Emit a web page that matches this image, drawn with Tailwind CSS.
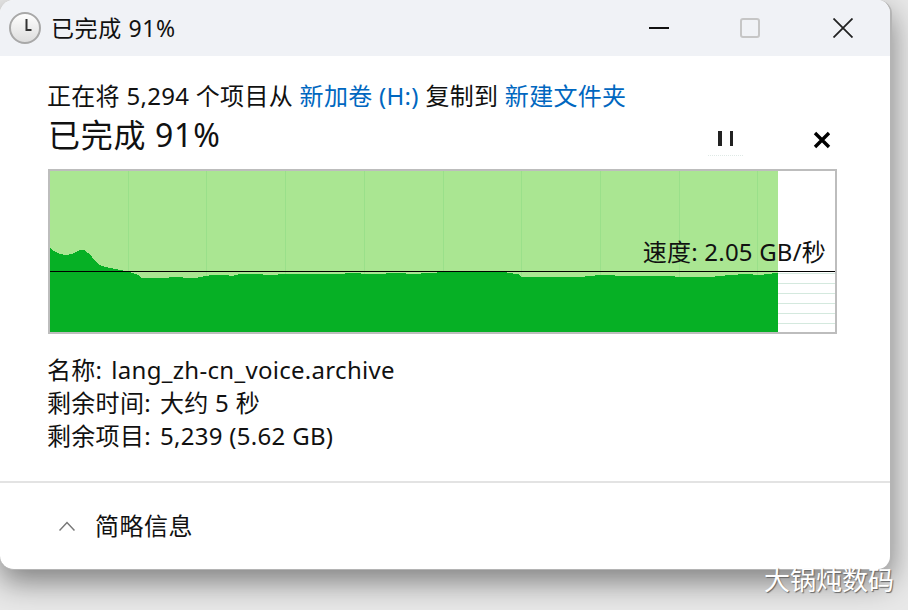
<!DOCTYPE html>
<html lang="zh-CN">
<head>
  <meta charset="UTF-8">
  <title>已完成 91%</title>
  <script src="https://cdn.jsdelivr.net/npm/@tailwindcss/browser@4"></script>
</head>
<body class="relative w-[908px] h-[610px] overflow-hidden bg-[#e8e8e8] font-['Noto_Sans','Noto_Sans_CJK_SC',sans-serif] text-[#111]">
  <!-- window -->
  <div class="flex flex-col w-[892px] h-[570px] bg-white rounded-[14px] border-r-2 border-b border-[#b4b4b4] overflow-hidden shadow-[0_12px_30px_rgba(0,0,0,0.45)]">
    <!-- title bar -->
    <div class="flex items-center h-14 shrink-0 bg-[#f0f2f6] pl-[9px]">
      <svg class="w-[32px] h-[32px]" viewBox="0 0 32 32">
        <defs>
          <linearGradient id="face" x1="0" y1="0" x2="0" y2="1">
            <stop offset="0" stop-color="#ffffff"/>
            <stop offset="1" stop-color="#dcdcdc"/>
          </linearGradient>
        </defs>
        <circle cx="16" cy="16" r="15" fill="url(#face)" stroke="#a8a8a8" stroke-width="2"/>
        <path d="M17.5 7v11h5" fill="none" stroke="#333" stroke-width="2"/>
      </svg>
      <span class="ml-[10px] text-[23px] leading-none tracking-[0.6px]">已完成 91%</span>
      <div class="flex items-center ml-auto">
        <svg class="w-5 h-5 mr-[71px]" viewBox="0 0 20 20"><path d="M0 10h20" stroke="#111" stroke-width="2"/></svg>
        <svg class="w-5 h-5 mr-[73px]" viewBox="0 0 20 20"><rect x="1" y="1" width="18" height="18" rx="2" fill="none" stroke="#c6c6c6" stroke-width="2"/></svg>
        <svg class="w-5 h-5 mr-[37px]" viewBox="0 0 20 20"><path d="M0.5 0.5l19 19M19.5 0.5l-19 19" stroke="#222" stroke-width="1.8"/></svg>
      </div>
    </div>
    <!-- progress -->
    <div class="flex flex-col flex-1 pl-12 pr-[53px]">
      <p class="-ml-px mt-[22px] text-[24px] leading-[36px] whitespace-nowrap tracking-[0.3px]">正在将 5,294 个项目从 <span class="text-[#0067c0]">新加卷 (H:)</span> 复制到 <span class="text-[#0067c0]">新建文件夹</span></p>
      <div class="flex items-center h-[42px]">
        <span class="text-[32px] leading-none tracking-[0.7px]">已完成 91%</span>
        <div class="ml-auto mr-[70px] flex gap-2 mt-[8px] border-b border-dotted border-[#dfe9e6] h-[34px] w-[35px] justify-center pt-[9px]">
          <span class="w-[3.5px] h-[15px] bg-[#222]"></span>
          <span class="w-[3.5px] h-[15px] bg-[#222]"></span>
        </div>
        <svg class="w-[18px] h-[18px] mr-[6px] mt-[10px]" viewBox="0 0 18 18"><path d="M2 2l14 14M16 2L2 16" stroke="#000" stroke-width="3.4"/></svg>
      </div>
      <!-- chart -->
      <div class="relative w-[789px] h-[165px] mt-[13px] border-2 border-[#bdbdbd] bg-white">
        <svg class="block" width="785" height="161" viewBox="50 171 785 161" shape-rendering="crispEdges">
          <rect x="50" y="171" width="728" height="161" fill="#aae692"/>
          <g stroke="#9ae08a" stroke-width="1">
            <path d="M128.5 171v161M206.5 171v161M285.5 171v161M364.5 171v161M443.5 171v161M521.5 171v161M600.5 171v161M679.5 171v161M757.5 171v161"/>
          </g>
          <g stroke="#d4e9de" stroke-width="1">
            <path d="M778 273.5h57M778 283.5h57M778 293.5h57M778 303.5h57M778 313.5h57M778 323.5h57"/>
          </g>
          <path fill="#06b025" d="M50 332V248L54 251L60 254L66 255L72 254L76 252L80 250L84 250L88 253L92 257L96 262L100 265L105 267L110 268L115 269L120 270L128 271.5L133 273L138 275L142 278L148 278.5L156 278L165 278L172 277L180 277L186 278L190 278.5L196 278L205 276L212 275L225 275L232 276L240 274L255 274L270 275L285 274L300 274L320 273.5L340 274L350 273L372 274L400 273L412 274L430 273L452 271.5L505 271.5L508 273L518 274L521 277L545 277.5L580 277L600 275L630 276L660 276L690 277L705 277.5L730 275L745 274L760 275L778 272.7V332Z"/>
          <path d="M50 271.5h785" stroke="#000" stroke-width="1"/>
        </svg>
        <span class="absolute right-[9px] top-[64px] text-[24px] leading-[34px] whitespace-nowrap tracking-[0.2px]">速度: 2.05 GB/秒</span>
      </div>
      <!-- details -->
      <div class="-ml-px mt-[19px] flex flex-col text-[24px] leading-[33px] tracking-[0.3px]">
        <div class="flex gap-[9px]"><span>名称:</span><span>lang_zh-cn_voice.archive</span></div>
        <div class="flex gap-[9px]"><span>剩余时间:</span><span>大约 5 秒</span></div>
        <div class="flex gap-[9px]"><span>剩余项目:</span><span>5,239 (5.62 GB)</span></div>
      </div>
    </div>
    <!-- footer -->
    <div class="flex items-center h-[88px] shrink-0 border-t-2 border-[#e3e3e3] pl-[59px]">
      <svg class="w-4 h-[10px]" viewBox="0 0 16 10"><path d="M0.5 9.5L8 1.5L15.5 9.5" fill="none" stroke="#777" stroke-width="1.5"/></svg>
      <span class="ml-[20px] text-[24px] leading-none tracking-[0.5px]">简略信息</span>
    </div>
  </div>
  <!-- watermark -->
  <span class="absolute left-[764px] top-[563px] text-[26px] leading-[34px] text-white whitespace-nowrap [text-shadow:1px_1px_1px_#666]">大锅炖数码</span>
</body>
</html>
